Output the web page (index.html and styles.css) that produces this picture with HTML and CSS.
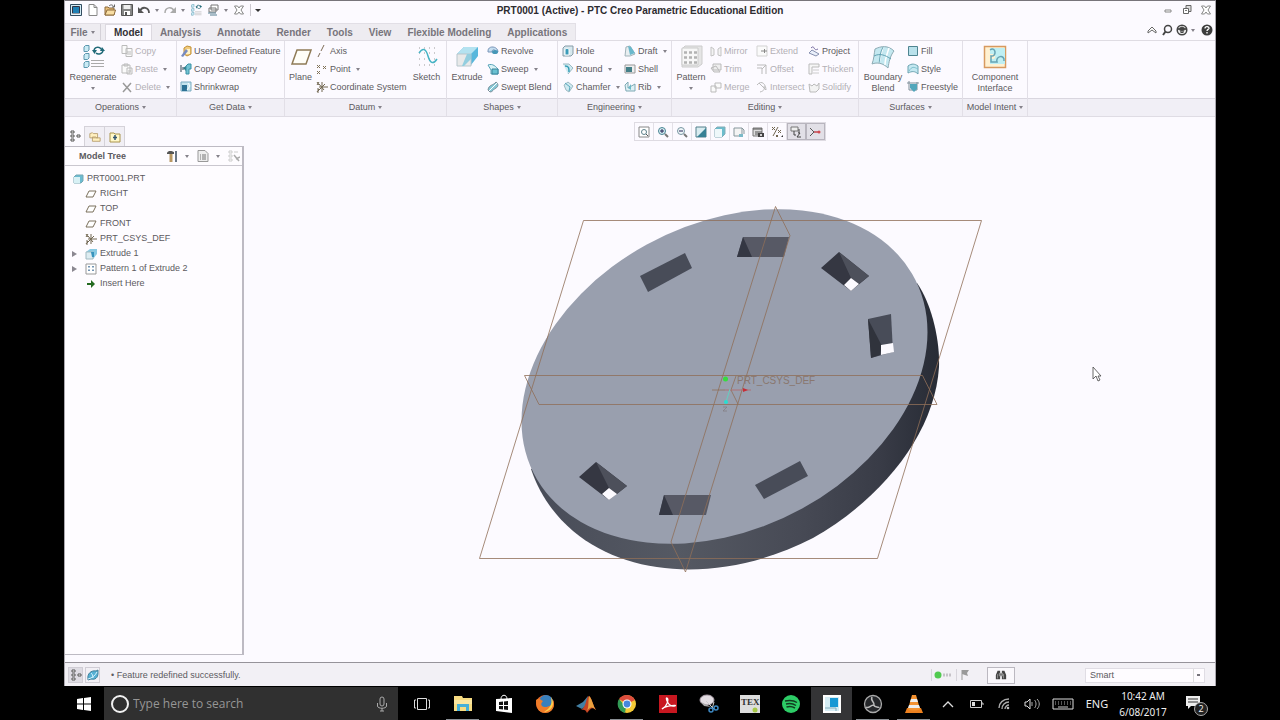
FILE: index.html
```html
<!DOCTYPE html>
<html lang="en">
<head>
<meta charset="utf-8">
<title>PRT0001 (Active) - PTC Creo Parametric Educational Edition</title>
<link rel="stylesheet" href="styles.css">
</head>
<body>
<svg class="defs" aria-hidden="true">
  <symbol id="logo" viewBox="0 0 12 12"><path d="M.5.5h11v11H.5z" fill="#d5edf6" stroke="#334c60"/><path d="M2.500 2.500h7v7h-7z" fill="#1f7fb4" stroke="#334"/><path d="M2 10h8" stroke="#fff"/></symbol>
  <symbol id="new" viewBox="0 0 12 12"><path d="M2 .5h5l3 3v8H2zM7 .5v3h3" fill="#fff" stroke="#888"/></symbol>
  <symbol id="open" viewBox="0 0 12 12"><path d="M1 11V3h3l1 1h5v7z" fill="#e8bd7a" stroke="#8c6b3c"/><path d="M1 11l2-5h8.500L10 11z" fill="#f8dda2" stroke="#8c6b3c"/><path d="M5 2c2-2 4-1 5 1M10.500.5V3H8" fill="none" stroke="#666"/></symbol>
  <symbol id="save" viewBox="0 0 12 12"><path d="M.5.5h11v11H.5z" fill="#858585" stroke="#555"/><path d="M2.500 1h7v4h-7z" fill="#eee"/><path d="M3 7h6v4H3z" fill="#fff"/><path d="M4 8h2v3H4z" fill="#555"/></symbol>
  <symbol id="undo" viewBox="0 0 12 12"><path d="M2 7c2-5 9-4 9 2" fill="none" stroke="#555" stroke-width="1.800"/><path d="M0 3v6h6z" fill="#555"/></symbol>
  <symbol id="redo" viewBox="0 0 12 12"><path d="M10 7C8 2 1 3 1 9" fill="none" stroke="#aaa" stroke-width="1.500"/><path d="M12 3v6H6z" fill="#aaa"/></symbol>
  <symbol id="regen" viewBox="0 0 24 24"><g fill="#c9eaf4" stroke="#5b97ae"><path d="M3 2l1.500-1.500H8V5L6.500 6.500H3z"/><path d="M3 10l1.500-1.500H8V13l-1.500 1.500H3z"/><path d="M3 18l1.500-1.500H8V21l-1.500 1.500H3z"/></g><path d="M13 6c0-4 5-5 7-2M22 5c0 4-5 5-7 3" fill="none" stroke="#216a78" stroke-width="1.500"/><path d="M11 5h5l-2.500 4zM19 6h5l-3-4z" fill="#216a78"/><path d="M10 15.500h13M10 18.500h13M10 21.500h13" stroke="#aaa"/></symbol>
  <symbol id="windows" viewBox="0 0 12 12"><path d="M4 1h7v5H4zM2 4h7v4H2z" fill="#fff" stroke="#777"/><path d="M1 9h8M3 11h7" stroke="#557f91"/></symbol>
  <symbol id="closewin" viewBox="0 0 12 12"><path d="M1.500 2h3L6 4l1.500-2h3L8 6l2.500 4h-3L6 8l-1.500 2h-3L4 6z" fill="#fff" stroke="#888"/></symbol>
  <symbol id="minwin" viewBox="0 0 12 12"><path d="M3 6h6v2H3z" fill="#fff" stroke="#888"/></symbol>
  <symbol id="maxwin" viewBox="0 0 12 12"><path d="M5 1.500h5v6H5z" fill="#ddd" stroke="#666"/><path d="M2.500 4.500h5v5h-5z" fill="#fff" stroke="#666"/><path d="M4 6.500h2" fill="none" stroke="#777"/></symbol>
  <symbol id="copy" viewBox="0 0 12 12"><path d="M1 .5h5v8H1zM5 3.500h6v8H5z" fill="#fafafa" stroke="#bbb"/><path d="M6 7h4M6 9h4" stroke="#bbb"/></symbol>
  <symbol id="paste" viewBox="0 0 12 12"><path d="M1 2h8v8H1zM3 1h4v2H3zM6 5h5v6H6z" fill="#fafafa" stroke="#bbb"/><path d="M7 8h3" stroke="#bbb"/></symbol>
  <symbol id="delete" viewBox="0 0 12 12"><path d="M2 2l8 9M10 2l-8 9" stroke="#999" stroke-width="1.500"/></symbol>
  <symbol id="udf" viewBox="0 0 12 12"><path d="M4 3l3-2 4 1v7l-4 2-3-2z" fill="#f2cb7c" stroke="#c19037"/><path d="M6 4h4v5H6z" fill="#fff3c9"/><path d="M1 11l5-7 2 2-5 6z" fill="#788bc1"/></symbol>
  <symbol id="copygeo" viewBox="0 0 12 12"><path d="M1 2v7M3 4v3" stroke="#345"/><path d="M3 5l3-2v5z" fill="#317b85"/><path d="M6 3l2-2h3v5H9v5H6z" fill="#73c3d3" stroke="#3a91a5"/></symbol>
  <symbol id="shrink" viewBox="0 0 12 12"><path d="M1 1h10v9H1z" fill="#c6e5ef" stroke="#7babc1"/><path d="M2 4h5v6H2z" fill="#2d7295"/><path d="M8 2l2 3-3 4" fill="none" stroke="#fff"/></symbol>
  <symbol id="plane" viewBox="0 0 24 24"><path d="M8 5h14l-5 14H3z" fill="#fffef8" stroke="#8f7b57" stroke-width="1.500"/></symbol>
  <symbol id="axis" viewBox="0 0 12 12"><path d="M8 0L5 6M4 8l-2 4" stroke="#7d6b55"/></symbol>
  <symbol id="point" viewBox="0 0 12 12"><path d="M1 2l3 3M4 2L1 5M7 3l3 3M10 3L7 6M1 8l3 3M4 8l-3 3" stroke="#7f7156"/></symbol>
  <symbol id="csys" viewBox="0 0 12 12"><path d="M6 1v10M3 6h9M2 10l7-7M3 3l5 6M1 1l2 3M3 1L1 4M1 8h2l-2 3h2" fill="none" stroke="#716650"/></symbol>
  <symbol id="sketch" viewBox="0 0 24 24"><path d="M4 3h18M4 8h18M4 14h18M4 20h18" stroke="#9a9a9a" stroke-dasharray="1 4"/><path d="M4 8c4-6 7-4 9 3s5 9 9 3" fill="none" stroke="#45b3c4" stroke-width="1.500"/></symbol>
  <symbol id="extrude" viewBox="0 0 24 24"><path d="M9 2h14v9l-7 9V9H2z" fill="#58b7dc"/><path d="M2 9l7-7h14l-7 7z" fill="#b4e2f0"/><path d="M2 9h14v12H2z" fill="#e8e9e9" stroke="#b7c6cc"/><path d="M12 9h4v5l-7 7H7z" fill="#93cedf"/></symbol>
  <symbol id="revolve" viewBox="0 0 12 12"><path d="M1 6c0-6 10-5 10 1H9C8 4 5 4 5 7H1z" fill="#c5def0" stroke="#7894b8"/><ellipse cx="8" cy="7" rx="3" ry="2" fill="#4697b7"/></symbol>
  <symbol id="sweep" viewBox="0 0 12 12"><path d="M1 2c5-2 8 2 10 4v5H4V7z" fill="#d9f2f5" stroke="#56a3b9"/><path d="M5 6h6v5H5z" fill="#6ac1d1" stroke="#39839a"/></symbol>
  <symbol id="blend" viewBox="0 0 12 12"><path d="M1 9C2 3 6 5 9 1c3 2 2 5 0 6-3 1-3 4-6 4z" fill="#87c9d7" stroke="#788f9b"/><path d="M2 10l8-8" stroke="#fff"/></symbol>
  <symbol id="hole" viewBox="0 0 12 12"><path d="M1 3l2-2h8v8l-2 2H1z" fill="#d7e8ee" stroke="#879ca8"/><path d="M3 10V5c0-2 4-2 4 0v5z" fill="#3b9bb9" stroke="#fff"/></symbol>
  <symbol id="round" viewBox="0 0 12 12"><path d="M1 1h6l4 4-5 6" fill="#cfeaf1" stroke="#9bb9c2"/><path d="M3 3c4 0 4 2 4 6" fill="none" stroke="#349db6" stroke-width="1.500"/></symbol>
  <symbol id="chamfer" viewBox="0 0 12 12"><path d="M2 4l4-3 5 4-4 6-3-2z" fill="#cfeaf1" stroke="#9bb9c2"/><path d="M3 2l5 4-1 4" fill="none" stroke="#58a9bd"/></symbol>
  <symbol id="draft" viewBox="0 0 12 12"><path d="M2 2l4-1 5 8-5 2H1z" fill="#e8eef0" stroke="#a1b3ba"/><path d="M4 1l3 1 4 6-5 2z" fill="#6ab8cc"/></symbol>
  <symbol id="shell" viewBox="0 0 12 12"><path d="M1 2h10v8H1z" fill="#eee" stroke="#999"/><path d="M2 4h6v5H2z" fill="#437f88"/></symbol>
  <symbol id="rib" viewBox="0 0 12 12"><path d="M1 4l3-3v6l7-4v7H2z" fill="#dff1f5" stroke="#7fa9b4"/><path d="M4 7l3-4v6z" fill="#6db9c7"/></symbol>
  <symbol id="pattern" viewBox="0 0 24 24"><path d="M3 4l3-3h17v18l-4 3H3z" fill="#e5e5e5" stroke="#ccc"/><path d="M3 3h16v17H3z" fill="#f7f7f7" stroke="#ccc"/><path d="M5 7.500h13M5 12.500h13M5 17.500h13" stroke="#b2b2b2" stroke-width="2.500" stroke-dasharray="3 2"/></symbol>
  <symbol id="mirror" viewBox="0 0 12 12"><path d="M1 2l3 2v6l-3 1zM11 2L8 4v6l3 1z" fill="#f3f3f3" stroke="#c3c3c3"/></symbol>
  <symbol id="trim" viewBox="0 0 12 12"><path d="M3 1h8v6H3zM1 5l5-2 4 6H4z" fill="#eee" stroke="#bbb"/></symbol>
  <symbol id="merge" viewBox="0 0 12 12"><path d="M1 5h5v6H1zM5 2h6v5H5z" fill="#fafafa" stroke="#bbb"/></symbol>
  <symbol id="extend" viewBox="0 0 12 12"><path d="M1 1h10v10H1z" fill="#fafafa" stroke="#d2d2d2"/><path d="M5 6h6M8.500 4v4" stroke="#888"/></symbol>
  <symbol id="offset" viewBox="0 0 12 12"><path d="M1 2h9v9M1 5h5v6M6 6l4-4" fill="none" stroke="#bbb"/></symbol>
  <symbol id="intersect" viewBox="0 0 12 12"><path d="M1 4c5-6 9 0 9 5M4 11c4-1 5-3 4-6M3 2l7 7" fill="none" stroke="#bbb"/></symbol>
  <symbol id="project" viewBox="0 0 12 12"><path d="M1 8l3-3 7 4-3 2z" fill="#e9effa" stroke="#8690af"/><path d="M3 3c4-4 2 4 7 1" fill="none" stroke="#786fa2"/></symbol>
  <symbol id="thicken" viewBox="0 0 12 12"><path d="M1 1h10v3H4v7H1z" fill="#f6f6f6" stroke="#bbb"/><path d="M5 7h6M5 10h6" stroke="#ccc"/></symbol>
  <symbol id="solid" viewBox="0 0 12 12"><path d="M1 3l3 2 2-2 3 2 2-3v6l-3 3H2z" fill="#f3f3f3" stroke="#bbb"/></symbol>
  <symbol id="boundary" viewBox="0 0 24 24"><path d="M4 4C10 1 17 0 23 6c-4 5-5 11-6 17-5-5-11-6-16-4 2-5 2-10 3-15z" fill="#c4e8f0" stroke="#8eabb4"/><path d="M12 2c-2 6-3 12-4 16M18 3c-2 6-4 11-4 17" fill="none" stroke="#fff" stroke-width="1.500"/><path d="M3 11c6-3 11-1 17 3M12 2c-3 5-3 11-4 16" fill="none" stroke="#60a1b2"/></symbol>
  <symbol id="fill" viewBox="0 0 12 12"><path d="M1.500 1.500h9v9h-9z" fill="#b9e1eb" stroke="#4e8490"/></symbol>
  <symbol id="style" viewBox="0 0 12 12"><path d="M1 3c4-3 7-2 10 0v8c-3-3-6-3-10-1z" fill="#c4e8f1" stroke="#6aa2b0"/><path d="M2 8c3-5 5-4 9-2" fill="none" stroke="#7dc0cd"/></symbol>
  <symbol id="free" viewBox="0 0 12 12"><path d="M0 2h12M2 0v9h8V1" fill="none" stroke="#7f8e98"/><path d="M3 3h7v5l-3 3-4-4z" fill="#52a6bb"/></symbol>
  <symbol id="component" viewBox="0 0 24 24"><path d="M1.500 1.500h21v21h-21z" fill="#fff1d2" stroke="#d79a60" stroke-width="1.500"/><path d="M7 3h15v16H7v-5h3c3 0 3-5 0-5H7z" fill="#bfeff3"/><path d="M7 5c6-4 7 7 1 6v6h6c-2-6 8-8 7-1" fill="none" stroke="#67a4b4" stroke-width="1.500"/></symbol>
  <symbol id="up" viewBox="0 0 12 12"><path d="M2 7l4-4 4 4v2L6 6 2 9z" fill="#fff" stroke="#666"/></symbol>
  <symbol id="find" viewBox="0 0 12 12"><circle cx="7" cy="5" r="3.500" fill="none" stroke="#444" stroke-width="1.500"/><path d="M4.500 7.500L2 11" stroke="#444" stroke-width="2"/></symbol>
  <symbol id="learn" viewBox="0 0 12 12"><circle cx="6" cy="6" r="4.800" fill="#eee" stroke="#444" stroke-width="1.500"/><path d="M2 5l4-2 4 2-4 2zM4 7.500c1 1.500 3 1.500 4 0" fill="#444" stroke="#444"/></symbol>
  <symbol id="help" viewBox="0 0 12 12"><circle cx="6" cy="6" r="5.500" fill="#3d3d3d"/><path d="M4 4.500c0-3 4.500-2 4 0-.5 1-2 1-2 2.500M6 8v1.500" fill="none" stroke="#fff" stroke-width="1.300"/></symbol>
  <symbol id="zoomin" viewBox="0 0 12 12"><circle cx="5" cy="5" r="3.500" fill="#d8eff3" stroke="#498493"/><path d="M8 8l3 3" stroke="#777" stroke-width="2"/><path d="M3 5h4M5 3v4" stroke="#225"/></symbol>
  <symbol id="zoomout" viewBox="0 0 12 12"><circle cx="5" cy="5" r="3.500" fill="#eff7f9" stroke="#7996a2"/><path d="M8 8l3 3" stroke="#777" stroke-width="2"/><path d="M3 5h4" stroke="#225"/></symbol>
  <symbol id="refit" viewBox="0 0 12 12"><path d="M1 1h10v10H1z" fill="#fff" stroke="#888"/><circle cx="6" cy="6" r="2.500" fill="none" stroke="#5c7f8a"/><path d="M8 8l2 2" stroke="#555"/></symbol>
  <symbol id="repaint" viewBox="0 0 12 12"><path d="M1 1h10v10H1z" fill="#d9ecf0" stroke="#54808c"/><path d="M2 11l9-9v9z" fill="#378195"/></symbol>
  <symbol id="cube" viewBox="0 0 12 12"><path d="M1 3l2-2h8v7l-3 3H1z" fill="#6bbdcd" stroke="#84adb7"/><path d="M1 3h7v8H1z" fill="#eef8fa"/></symbol>
  <symbol id="views" viewBox="0 0 12 12"><path d="M1 2h8v8H1zM9 2l2 2v4" fill="#f4f4f4" stroke="#87979c"/><path d="M6 8h4v3H6z" fill="#7bbac8"/></symbol>
  <symbol id="viewmgr" viewBox="0 0 12 12"><path d="M1 2h9v8H1z" fill="#ddd" stroke="#777"/><path d="M1 3h9M3 6h7M3 8h7" stroke="#555"/><path d="M6 7h6v4H6z" fill="#444"/><circle cx="9" cy="9" r="1" fill="#fff"/></symbol>
  <symbol id="filters" viewBox="0 0 12 12"><path d="M1 1l3 3M4 1L1 4M7 1L2 10M7 4l3 3M10 4L7 7M5 9l2 2M7 9l-2 2" stroke="#716650"/><path d="M10 11h2V9z" fill="#333"/></symbol>
  <symbol id="annot" viewBox="0 0 12 12"><path d="M1 1h7v4H1z" fill="#eee" stroke="#777"/><path d="M4 5v4h2M9 3v4M8 7h2l-3 4h4" fill="none" stroke="#444"/></symbol>
  <symbol id="spin" viewBox="0 0 12 12"><path d="M1 2l4 4-4 4" fill="none" stroke="#555"/><path d="M5 6h5" stroke="#c2474f" stroke-width="1.500"/><circle cx="10" cy="6" r="1.500" fill="#d24a52"/></symbol>
  <symbol id="treeico" viewBox="0 0 12 12"><path d="M2 1h3v2H2zM2 5h3v2H2zM2 9h3v2H2zM8 5h3v2H8z" fill="#fff" stroke="#555"/></symbol>
  <symbol id="folders" viewBox="0 0 14 12"><path d="M1 2l3-1 1 1h5v5H1zM4 6h4l1 1h4v4H4z" fill="#fff0bf" stroke="#b59b6a"/></symbol>
  <symbol id="favorite" viewBox="0 0 12 12"><path d="M1 2h4l1 1h5v8H1z" fill="#fff8c9" stroke="#aa944c"/><path d="M6 4v5M4 6.500h4" stroke="#335570" stroke-width="1.500"/></symbol>
  <symbol id="tools" viewBox="0 0 12 12"><path d="M1 3c1-3 5-2 7-1v2H1z" fill="#555"/><path d="M5 4v8" stroke="#b99862" stroke-width="3"/><path d="M10 1v11" stroke="#6a7685" stroke-width="2"/></symbol>
  <symbol id="list" viewBox="0 0 12 12"><path d="M1 .5h7l3 3v8H1z" fill="#eee" stroke="#999"/><path d="M3 5h1M5 5h4M3 7h1M5 7h4M3 9h1M5 9h4" stroke="#777"/></symbol>
  <symbol id="filter" viewBox="0 0 12 12"><path d="M1 1h3v2H1zM1 5h3v2H1zM1 9h3v2H1zM6 2h4" fill="#fff" stroke="#ccc"/><path d="M6 5l5 6M8 9l4-2" stroke="#aaa" stroke-width="1.500"/></symbol>
  <symbol id="part" viewBox="0 0 12 12"><path d="M2 4l2-2h7v6l-2 2H2z" fill="#6cbcd1" stroke="#77a7b3"/><path d="M2 4h6v6H2z" fill="#d8f1f5"/></symbol>
  <symbol id="datum" viewBox="0 0 12 12"><path d="M4 3h7L8 9H1z" fill="#fff" stroke="#7b705c"/></symbol>
  <symbol id="feature" viewBox="0 0 12 12"><path d="M1 4l4-3h7v5l-4 5H1z" fill="#88c9e2"/><path d="M1 4h7v7H1z" fill="#ddecf1" stroke="#a2bac2"/><path d="M6 4h3v5H7z" fill="#3893bd"/></symbol>
  <symbol id="pattree" viewBox="0 0 12 12"><path d="M1 1h10v10H1z" fill="#fff" stroke="#999"/><path d="M4 3v7M8 3v7" stroke="#44709a" stroke-width="1.500" stroke-dasharray="1.500 2"/></symbol>
  <symbol id="insert" viewBox="0 0 12 12"><path d="M2 6h5" stroke="#246b20" stroke-width="2"/><path d="M6 2l4 4-4 4z" fill="#246b20"/></symbol>
  <symbol id="web" viewBox="0 0 12 12"><path d="M1 10C0 5 4 1 9 2l2-1v3c0 5-3 7-7 6l-3 1z" fill="#56b1d4" stroke="#42809a"/><path d="M1 10C5 9 8 7 10 3M4 4c1 1 2 2 2 5" fill="none" stroke="#d9f4ff"/></symbol>
  <symbol id="binoc" viewBox="0 0 14 12"><path d="M3 1h3v10H1V6zM8 1h3l2 5v5H8z" fill="#444"/><path d="M5 4h4v3H5zM3 5v5M10 5v5" fill="#777" stroke="#999"/></symbol>
</svg>

<main class="screen">
<div class="app">
  <header class="titlebar">
    <div class="quick">
      <button aria-label="Window menu"><svg class="ic"><use href="#logo"/></svg></button>
      <button aria-label="New"><svg class="ic"><use href="#new"/></svg></button>
      <button aria-label="Open"><svg class="ic"><use href="#open"/></svg></button>
      <button aria-label="Save"><svg class="ic"><use href="#save"/></svg></button>
      <button aria-label="Undo" class="drop"><svg class="ic"><use href="#undo"/></svg><i class="caret"></i></button>
      <button aria-label="Redo" class="drop"><svg class="ic"><use href="#redo"/></svg><i class="caret"></i></button>
      <button aria-label="Regenerate"><svg class="ic"><use href="#regen"/></svg></button>
      <button aria-label="Windows" class="drop"><svg class="ic"><use href="#windows"/></svg><i class="caret"></i></button>
      <button aria-label="Close window"><svg class="ic"><use href="#closewin"/></svg></button>
      <button aria-label="Customize toolbar" class="custom"><i class="caret dark"></i></button>
    </div>
    <h1>PRT0001 (Active) - PTC Creo Parametric Educational Edition</h1>
    <div class="winbtns">
      <button aria-label="Minimize"><svg class="ic"><use href="#minwin"/></svg></button>
      <button aria-label="Restore"><svg class="ic"><use href="#maxwin"/></svg></button>
      <button aria-label="Close"><svg class="ic"><use href="#closewin"/></svg></button>
    </div>
  </header>

  <nav class="tabbar">
    <div class="tabs">
      <button class="file">File <i class="caret"></i></button>
      <button class="active">Model</button>
      <button>Analysis</button>
      <button>Annotate</button>
      <button>Render</button>
      <button>Tools</button>
      <button>View</button>
      <button>Flexible Modeling</button>
      <button>Applications</button>
    </div>
    <div class="helpers">
      <button aria-label="Minimize ribbon"><svg class="ic"><use href="#up"/></svg></button>
      <button aria-label="Search commands"><svg class="ic"><use href="#find"/></svg></button>
      <button aria-label="Learning" class="drop"><svg class="ic"><use href="#learn"/></svg><i class="caret"></i></button>
      <button aria-label="Help"><svg class="ic"><use href="#help"/></svg></button>
    </div>
  </nav>

  <div class="ribbon">
    <section class="group operations">
      <div class="tools">
        <button class="big"><svg><use href="#regen"/></svg>Regenerate<i class="caret"></i></button>
        <div class="col off">
          <button><svg class="ic"><use href="#copy"/></svg>Copy</button>
          <button><svg class="ic"><use href="#paste"/></svg>Paste<i class="caret"></i></button>
          <button><svg class="ic"><use href="#delete"/></svg>Delete<i class="caret"></i></button>
        </div>
      </div>
      <button class="foot">Operations<i class="caret"></i></button>
    </section>
    <section class="group getdata">
      <div class="tools">
        <div class="col">
          <button><svg class="ic"><use href="#udf"/></svg>User-Defined Feature</button>
          <button><svg class="ic"><use href="#copygeo"/></svg>Copy Geometry</button>
          <button><svg class="ic"><use href="#shrink"/></svg>Shrinkwrap</button>
        </div>
      </div>
      <button class="foot">Get Data<i class="caret"></i></button>
    </section>
    <section class="group datum">
      <div class="tools">
        <button class="big"><svg><use href="#plane"/></svg>Plane</button>
        <div class="col">
          <button><svg class="ic"><use href="#axis"/></svg>Axis</button>
          <button><svg class="ic"><use href="#point"/></svg>Point<i class="caret"></i></button>
          <button><svg class="ic"><use href="#csys"/></svg>Coordinate System</button>
        </div>
        <button class="big"><svg><use href="#sketch"/></svg>Sketch</button>
      </div>
      <button class="foot">Datum<i class="caret"></i></button>
    </section>
    <section class="group shapes">
      <div class="tools">
        <button class="big"><svg><use href="#extrude"/></svg>Extrude</button>
        <div class="col">
          <button><svg class="ic"><use href="#revolve"/></svg>Revolve</button>
          <button><svg class="ic"><use href="#sweep"/></svg>Sweep<i class="caret"></i></button>
          <button><svg class="ic"><use href="#blend"/></svg>Swept Blend</button>
        </div>
      </div>
      <button class="foot">Shapes<i class="caret"></i></button>
    </section>
    <section class="group engineering">
      <div class="tools">
        <div class="col">
          <button><svg class="ic"><use href="#hole"/></svg>Hole</button>
          <button><svg class="ic"><use href="#round"/></svg>Round<i class="caret"></i></button>
          <button><svg class="ic"><use href="#chamfer"/></svg>Chamfer<i class="caret"></i></button>
        </div>
        <div class="col">
          <button><svg class="ic"><use href="#draft"/></svg>Draft<i class="caret"></i></button>
          <button><svg class="ic"><use href="#shell"/></svg>Shell</button>
          <button><svg class="ic"><use href="#rib"/></svg>Rib<i class="caret"></i></button>
        </div>
      </div>
      <button class="foot">Engineering<i class="caret"></i></button>
    </section>
    <section class="group editing">
      <div class="tools">
        <button class="big"><svg><use href="#pattern"/></svg>Pattern<i class="caret"></i></button>
        <div class="col off">
          <button><svg class="ic"><use href="#mirror"/></svg>Mirror</button>
          <button><svg class="ic"><use href="#trim"/></svg>Trim</button>
          <button><svg class="ic"><use href="#merge"/></svg>Merge</button>
        </div>
        <div class="col off">
          <button><svg class="ic"><use href="#extend"/></svg>Extend</button>
          <button><svg class="ic"><use href="#offset"/></svg>Offset</button>
          <button><svg class="ic"><use href="#intersect"/></svg>Intersect</button>
        </div>
        <div class="col off">
          <button class="on"><svg class="ic"><use href="#project"/></svg>Project</button>
          <button><svg class="ic"><use href="#thicken"/></svg>Thicken</button>
          <button><svg class="ic"><use href="#solid"/></svg>Solidify</button>
        </div>
      </div>
      <button class="foot">Editing<i class="caret"></i></button>
    </section>
    <section class="group surfaces">
      <div class="tools">
        <button class="big"><svg><use href="#boundary"/></svg>Boundary<br>Blend</button>
        <div class="col">
          <button><svg class="ic"><use href="#fill"/></svg>Fill</button>
          <button><svg class="ic"><use href="#style"/></svg>Style</button>
          <button><svg class="ic"><use href="#free"/></svg>Freestyle</button>
        </div>
      </div>
      <button class="foot">Surfaces<i class="caret"></i></button>
    </section>
    <section class="group intent">
      <div class="tools">
        <button class="big"><svg><use href="#component"/></svg>Component<br>Interface</button>
      </div>
      <button class="foot">Model Intent<i class="caret"></i></button>
    </section>
    <div class="rest"></div>
  </div>

  <div class="work">
    <aside class="side">
      <div class="sidetabs">
        <button aria-label="Model tree" class="active"><svg class="ic"><use href="#treeico"/></svg></button>
        <button aria-label="Folder browser"><svg class="ic"><use href="#folders"/></svg></button>
        <button aria-label="Favorites"><svg class="ic"><use href="#favorite"/></svg></button>
      </div>
      <div class="panel">
        <div class="panelhead">
          <h2>Model Tree</h2>
          <button aria-label="Settings" class="drop"><svg class="ic"><use href="#tools"/></svg><i class="caret"></i></button>
          <button aria-label="Show" class="drop"><svg class="ic"><use href="#list"/></svg><i class="caret"></i></button>
          <button aria-label="Filter"><svg class="ic"><use href="#filter"/></svg></button>
        </div>
        <ul class="tree">
          <li><svg class="ic"><use href="#part"/></svg>PRT0001.PRT</li>
          <li><i class="twist"></i><svg class="ic"><use href="#datum"/></svg>RIGHT</li>
          <li><i class="twist"></i><svg class="ic"><use href="#datum"/></svg>TOP</li>
          <li><i class="twist"></i><svg class="ic"><use href="#datum"/></svg>FRONT</li>
          <li><i class="twist"></i><svg class="ic"><use href="#csys"/></svg>PRT_CSYS_DEF</li>
          <li><i class="twist has"></i><svg class="ic"><use href="#feature"/></svg>Extrude 1</li>
          <li><i class="twist has"></i><svg class="ic"><use href="#pattree"/></svg>Pattern 1 of Extrude 2</li>
          <li><i class="twist"></i><svg class="ic"><use href="#insert"/></svg>Insert Here</li>
        </ul>
      </div>
    </aside>
    <div class="view">
      <div class="viewbar">
        <button aria-label="Refit"><svg class="ic"><use href="#refit"/></svg></button>
        <button aria-label="Zoom in"><svg class="ic"><use href="#zoomin"/></svg></button>
        <button aria-label="Zoom out"><svg class="ic"><use href="#zoomout"/></svg></button>
        <button aria-label="Repaint"><svg class="ic"><use href="#repaint"/></svg></button>
        <button aria-label="Display style"><svg class="ic"><use href="#cube"/></svg></button>
        <button aria-label="Saved orientations"><svg class="ic"><use href="#views"/></svg></button>
        <button aria-label="View manager"><svg class="ic"><use href="#viewmgr"/></svg></button>
        <button aria-label="Datum display filters"><svg class="ic"><use href="#filters"/></svg></button>
        <button aria-label="Annotation display" class="pressed"><svg class="ic"><use href="#annot"/></svg></button>
        <button aria-label="Spin center" class="pressed"><svg class="ic"><use href="#spin"/></svg></button>
      </div>
      <svg class="model" viewBox="244 141 971 521" role="img" aria-label="Disc with eight rectangular slots">
        <defs>
          <linearGradient id="rim" gradientUnits="userSpaceOnUse" x1="535" y1="0" x2="940" y2="0">
            <stop offset="0" stop-color="#484c58"/><stop offset=".35" stop-color="#555963"/><stop offset=".65" stop-color="#474a55"/><stop offset=".85" stop-color="#393c47"/><stop offset="1" stop-color="#272b35"/>
          </linearGradient>
        </defs>
        <path d="M917 283C931 303 940 338 939 367C935 433 882 499 813 538C732 580 634 582 573 531C553 514 539 493 531 469z" fill="url(#rim)"/>
        <circle r="1" transform="matrix(203 -44.500 0 -161.300 724.500 376.500)" fill="#999fae"/>
        <g fill="#484c58">
          <path d="M640 276l45-23 7 15-44 24z"/><path d="M755 485l45-24 8 15-44 23z"/>
          <path d="M743 237h46l-5 20h-47zM664 495h47l-5 20h-47z" fill="#575965"/>
          <path d="M743 237l9 20h-15zM664 495l9 20h-14z" fill="#343743"/>
          <path d="M839 252l30 24-18 15-30-23zM596 462l31 24-18 14-30-23z" fill="#353742"/>
          <path d="M839 252l30 24-10 8-8-6zM596 462l31 24-10 8-8-6z" fill="#4d505b"/>
          <path d="M868 319l23-5 2 38-22 6z"/><path d="M868 319l14 27-2 9-9 3z" fill="#30333c"/>
          <path d="M851 278l8 6-8 7-7-6zM609 488l8 6-8 6-7-6zM881 345l12-2 1 9-13 3z" fill="#fcfaff"/>
        </g>
        <g fill="none" stroke="#8f6f58" stroke-width=".8">
          <path d="M583.500 220.500h398L877.500 558.500h-398z"/>
          <path d="M524.500 375.500h398l14.500 29H539z"/>
          <path d="M775.500 206.500l14.500 29-104.500 336.500-14.500-30z"/>
          <path d="M736 376l-5 14 7 14M725 390h-13"/>
        </g>
        <path d="M725 390h26" stroke="#b56567" stroke-width=".8"/><path d="M743 388l5 2-5 2z" fill="#c62d38"/>
        <path d="M726 402l4-13" stroke="#63cfc1"/><circle cx="725.500" cy="379" r="2.500" fill="#36dc3e"/><circle cx="726" cy="402" r="2" fill="#29ded0"/>
        <text x="737" y="384" class="csyslabel">PRT_CSYS_DEF</text>
        <path d="M723 407h4l-4 4h4" fill="none" stroke="#847f83" stroke-width=".8"/>
        <path d="M1093 367v12l3-3 2 5 2-1-2-4h3z" fill="#fff" stroke="#444" stroke-width=".8"/>
      </svg>
    </div>
  </div>

  <footer class="status">
    <button aria-label="Toggle tree" class="tog pressed"><svg class="ic"><use href="#treeico"/></svg></button>
    <button aria-label="Toggle browser" class="tog"><svg class="ic"><use href="#web"/></svg></button>
    <p>• Feature redefined successfully.</p>
    <span class="lamp"><svg viewBox="0 0 24 12"><circle cx="6" cy="6" r="3.500" fill="#51ca50"/><path d="M11 6h8" stroke="#c5c2c8" stroke-width="3" stroke-dasharray="2 1"/></svg></span>
    <span class="flag"><svg viewBox="0 0 12 12"><path d="M3 1v10" stroke="#999"/><path d="M3 1h7L8 4l1 3-6-2z" fill="#999"/></svg></span>
    <button aria-label="Find" class="findbtn"><svg class="ic"><use href="#binoc"/></svg></button>
    <select aria-label="Selection filter"><option>Smart</option></select>
  </footer>
</div>

<footer class="taskbar">
  <button class="start" aria-label="Start"><svg viewBox="0 0 14 14"><path d="M0 2l6-1v5.500H0zM7 1l7-1v6.500H7zM0 7.500h6V13l-6-1zM7 7.500h7V14l-7-1z" fill="#fff"/></svg></button>
  <label class="search"><svg viewBox="0 0 20 20"><circle cx="10" cy="10" r="8" fill="none" stroke="#f2f2f2" stroke-width="2"/></svg><input type="text" aria-label="Search" placeholder="Type here to search"><svg viewBox="0 0 20 20"><rect x="8" y="3" width="4" height="9" rx="2" fill="none" stroke="#aaa"/><path d="M5.500 9v3c0 3 9 3 9 0V9M10 14v3M8 17h4" fill="none" stroke="#aaa"/></svg></label>
  <div class="apps">
    <button aria-label="Task view"><svg viewBox="0 0 20 20"><path d="M5.500 4.500h9v11h-9zM4 6H2.500v8H4M16 6h1.500v8H16" fill="none" stroke="#ddd"/></svg></button>
    <button aria-label="File Explorer" class="run"><svg viewBox="0 0 20 20"><path d="M1 2h8l1 2h9v13H1z" fill="#f7dc82"/><path d="M1 6h18v4H1z" fill="#fbe6a0"/><path d="M4 10h12v7h-3v-4H7v4H4z" fill="#46b0d8"/></svg></button>
    <button aria-label="Store"><svg viewBox="0 0 20 20"><path d="M7 5c0-5 6-5 6 0" fill="none" stroke="#fff"/><path d="M2 5l16-1v15L2 17z" fill="#fff"/><path d="M5 8l4-.5V11H5zM10 7.400l4-.4v4h-4zM5 12h4v3.500L5 15zM10 12h4v4l-4-.4z" fill="#111"/></svg></button>
    <button aria-label="Firefox"><svg viewBox="0 0 20 20"><circle cx="10" cy="10" r="9" fill="#e9682b"/><circle cx="11" cy="8" r="7" fill="#3980bd"/><path d="M1 6c3-3 5 0 7 1-3 3-2 6 2 6s8-2 8-7c3 8-2 13-8 13S1 14 1 6z" fill="#ef7c29"/><path d="M16 3c5 8 0 14-7 15 8-5 8-9 7-15z" fill="#ffcf4b"/></svg></button>
    <button aria-label="MATLAB"><svg viewBox="0 0 20 20"><path d="M0 12l7-4 5-6-1 9-5 4z" fill="#427fa3"/><path d="M5 16c5-2 5-13 8-14 3 2 4 10 7 14-4-3-5-2-9 3-1-3-3-4-6-3z" fill="#c64423"/><path d="M13 2c-1 7 0 10-2 15 3-4 5-5 9-1-3-4-4-12-7-14z" fill="#eba13e"/></svg></button>
    <button aria-label="Chrome" class="run"><svg viewBox="0 0 20 20"><circle cx="10" cy="10" r="9" fill="#f4c936"/><path d="M10 10L2 5c4-6 13-5 16 1z" fill="#dd4d3d"/><path d="M2 5l7 8-1 6C1 17-1 10 2 5z" fill="#319b56"/><circle cx="10" cy="10" r="4.500" fill="#fff"/><circle cx="10" cy="10" r="3.400" fill="#4687dd"/></svg></button>
    <button aria-label="Acrobat Reader"><svg viewBox="0 0 20 20"><path d="M1 1h18v18H1z" fill="#c81720"/><path d="M4 15c5-2 7-10 5-11s1 9 7 8S8 11 4 15z" fill="none" stroke="#fff" stroke-width="1.300"/></svg></button>
    <button aria-label="Snipping Tool"><svg viewBox="0 0 20 20"><ellipse cx="8" cy="6" rx="7" ry="5" fill="#e2dce1" stroke="#aa9da8"/><path d="M2 8l3 4 7 1" fill="#aaa"/><path d="M7 7l9 9M15 8l-2 7" stroke="#ccc"/><circle cx="12" cy="16" r="2" fill="none" stroke="#3e89c3" stroke-width="1.500"/><circle cx="17" cy="14" r="2" fill="none" stroke="#3e89c3" stroke-width="1.500"/></svg></button>
    <button aria-label="TeX editor"><svg viewBox="0 0 20 20"><path d="M0 1h20v18H0z" fill="#ddd"/><text x="1" y="11" class="tex">TEX</text><circle cx="15" cy="16" r="2.500" fill="#a7c847"/></svg></button>
    <button aria-label="Spotify"><svg viewBox="0 0 20 20"><circle cx="10" cy="10" r="9" fill="#2dcc66"/><path d="M4 7c5-1 9-.5 12 1.500M5 10c4-1 7-.5 10 1.500M5.500 13c3-1 6-.5 8.500 1" fill="none" stroke="#123b20" stroke-width="1.500"/></svg></button>
    <button aria-label="Creo" class="current"><svg viewBox="0 0 20 20"><path d="M1 1h18v18H1z" fill="#fff"/><path d="M3 3h14v14H3z" fill="#d5edf4"/><path d="M8 4h8v9H8z" fill="#1798d4"/><path d="M3 14h11v3" fill="none" stroke="#84adbc"/></svg></button>
    <button aria-label="OBS" class="run"><svg viewBox="0 0 20 20"><circle cx="10" cy="10" r="8.500" fill="#25272a" stroke="#aaa" stroke-width="1.300"/><path d="M9 3c-2 4 3 5 2 8M3 13c3 2 4-2 8-2M11 11c0 3 5 1 5 3" fill="none" stroke="#bbb" stroke-width="1.500"/></svg></button>
    <button aria-label="VLC" class="run"><svg viewBox="0 0 20 20"><path d="M3 14h14l2 5H1z" fill="#ed811f"/><path d="M8 1h4l4 14c-3 2-9 2-12 0z" fill="#f39130"/><path d="M7 5h6l1 3H6zM5 11h10l1 3H4z" fill="#eee"/></svg></button>
  </div>
  <div class="tray">
    <button aria-label="Hidden icons"><svg viewBox="0 0 20 20"><path d="M5 13l5-5 5 5" fill="none" stroke="#ddd" stroke-width="1.300"/></svg></button>
    <button aria-label="Battery"><svg viewBox="0 0 20 20"><path d="M4.500 6.500h11v7h-11zM16 9h1v2" fill="none" stroke="#ccc"/><path d="M6 8h3v4H6z" fill="#ddd"/></svg></button>
    <button aria-label="Network"><svg viewBox="0 0 20 20"><path d="M5 14C5 9 9 5 15 5M8 15c0-4 3-7 7-7M11 15c0-2 2-4 4-4" fill="none" stroke="#aaa" stroke-width="1.400"/><circle cx="14" cy="14" r="1.300" fill="#bbb"/></svg></button>
    <button aria-label="Volume"><svg viewBox="0 0 20 20"><path d="M3 8h2l3-3v10l-3-3H3z" fill="none" stroke="#ddd"/><path d="M10 8v4M12.500 6c2 2 2 6 0 8M15 5c3 3 3 7 0 10" fill="none" stroke="#aaa"/></svg></button>
    <button aria-label="Touch keyboard" class="wide"><svg viewBox="0 0 24 20"><path d="M2 5h20v10H2z" fill="none" stroke="#ddd"/><path d="M4 8h16M4 10h16" stroke="#aaa" stroke-dasharray="1 2"/><path d="M7 13h10" stroke="#ccc"/></svg></button>
    <button class="lang">ENG</button>
    <button class="clock">10:42 AM<br>6/08/2017</button>
    <button aria-label="Notifications, 2 new" class="notes"><svg viewBox="0 0 24 24"><path d="M4 4h14v10H9l-3 3v-3H4z" fill="#eee"/><path d="M6 7h10M6 10h10" stroke="#333"/></svg><span class="badge">2</span></button>
  </div>
</footer>
</main>
</body>
</html>
```

FILE: styles.css
```css
* { box-sizing: border-box; }
body {
  margin: 0;
  background: #000;
  color: #5c5a60;
  font: 9px/11px "Liberation Sans", Arial, sans-serif;
}
h1, h2, p, ul { margin: 0; padding: 0; font-size: inherit; }
button {
  display: flex;
  align-items: center;
  justify-content: center;
  margin: 0;
  padding: 0;
  border: 0;
  background: none;
  color: inherit;
  font: inherit;
  white-space: nowrap;
}
svg { display: block; flex: none; }
.defs { position: absolute; width: 0; height: 0; }
.ic { width: 12px; height: 12px; }
.caret {
  flex: none;
  margin-left: 3px;
  border: 2px solid transparent;
  border-top: 3px solid #85828a;
  border-bottom: 0;
}
.caret.dark { margin: 0; border-top-color: #333; border-width: 3px 3px 0; }

.screen {
  display: flex;
  flex-direction: column;
  min-height: 100vh;
  padding: 0 5%;
}
.app {
  display: flex;
  flex: 1;
  flex-direction: column;
  border-top: 1px solid #77747a;
  border-left: 1px solid #aaa7ae;
  border-right: 1px solid #aaa7ae;
  background: #fcfaff;
}

.titlebar, .tabbar { display: grid; grid-template-columns: 1fr auto 1fr; align-items: center; }
.titlebar { height: 18px; }
.titlebar h1 { color: #2d2b30; font-size: 10px; font-weight: bold; white-space: nowrap; }
.quick { display: flex; gap: 5px; padding-left: 5px; }
.quick .drop { gap: 3px; }
.quick .drop .caret { margin-left: 2px; }
.quick .custom { width: 14px; border-left: 1px solid #ccc9d0; }
.winbtns, .helpers { display: flex; justify-content: flex-end; }
.winbtns { gap: 7px; padding-right: 3px; }
.helpers { align-items: center; gap: 3px; padding-right: 2px; }
.helpers .caret { margin-right: 3px; }

.tabbar { grid-template-columns: auto 1fr; align-items: end; height: 22px; border-bottom: 1px solid #dfdce3; }
.helpers { height: 20px; }
.tabs { display: flex; background: #eeecf1; border: 1px solid #e2dfe6; border-bottom: 0; border-left: 0; }
.tabs button { height: 16px; padding: 0 8px; color: #77747b; font-size: 10px; font-weight: bold; }
.tabs .file { width: 36px; margin-right: 4px; padding: 0; border-right: 1px solid #d4d1d8; }
.tabs .active { background: #fcfaff; color: #333136; border: 1px solid #dcd9e0; border-width: 1px 1px 0; }

.ribbon { display: flex; border-bottom: 1px solid #dfdce4; }
.group { display: flex; flex-direction: column; flex: none; border-right: 1px solid #e2dfe7; }
.tools { display: grid; height: 57px; }
.foot, .rest { border-top: 1px solid #d9d6df; background: #f1eff6; }
.foot { height: 18px; }
.rest { flex: 1; align-self: flex-end; height: 18px; }
.operations { width: 112px; }
.operations .tools { grid-template-columns: 56px 1fr; }
.getdata { width: 108px; }
.getdata .tools { padding-left: 3px; }
.datum { width: 162px; }
.datum .tools { grid-template-columns: 31px 1fr 40px; }
.shapes { width: 111px; }
.shapes .tools { grid-template-columns: 40px 1fr; }
.engineering { width: 114px; }
.engineering .tools { grid-template-columns: 62px 1fr; padding-left: 4px; }
.editing { width: 187px; }
.editing .tools { grid-template-columns: 38px 46px 52px 1fr; }
.surfaces { width: 104px; }
.surfaces .tools { grid-template-columns: 48px 1fr; }
.intent { width: 65px; }
.big { flex-direction: column; justify-content: flex-start; padding-top: 4px; line-height: 11px; }
.big svg { width: 24px; height: 24px; margin-bottom: 3px; }
.big .caret { margin: 4px 0 0; }
.col { display: flex; flex-direction: column; align-items: flex-start; padding-top: 1px; }
.col button { height: 18px; gap: 2px; }
.off { color: #b3b0b6; }
.on { color: #5c5a60; }

.work { display: flex; flex: 1; }
.side { display: flex; flex-direction: column; flex: none; width: 179px; padding: 9px 0 7px; }
.sidetabs { display: flex; }
.sidetabs button { width: 20px; height: 20px; border: 1px solid #d5d2d9; border-left: 0; border-bottom: 0; background: #f1eff5; }
.sidetabs .active { background: #fcfaff; border-top: 0; }
.panel { flex: 1; border: 1px solid #bdbac3; border-left: 0; border-right-width: 2px; background: #fefcff; }
.panelhead { display: flex; align-items: center; gap: 8px; height: 19px; padding: 0 2px 0 14px; border-bottom: 1px solid #cac7cf; }
.panelhead h2 { flex: 1; font-weight: bold; }
.panelhead .caret { margin-left: 7px; }
.tree { padding: 5px 0 0 7px; list-style: none; }
.tree li { display: flex; align-items: center; gap: 3px; height: 15px; }
.twist { width: 10px; height: 6px; }
.has::before { content: ""; display: block; width: 0; border: 3px solid transparent; border-left: 5px solid #8b8890; border-right: 0; }

.view { display: flex; flex: 1; flex-direction: column; min-width: 0; }
.viewbar { display: flex; align-self: center; margin-top: 5px; border: 1px solid #dedbe2; }
.viewbar button { width: 19px; height: 17px; border-right: 1px solid #e3e0e7; }
.viewbar .pressed { background: #e2e0e7; border: 1px solid #b8b5be; }
.model { flex: 1; width: 100%; min-height: 0; }
.csyslabel { fill: #89776f; font-size: 10px; }

.status { display: flex; align-items: center; height: 24px; padding: 1px 10px 0 3px; border-top: 1px solid #96939a; background: #f2f0f5; }
.tog { width: 15px; height: 16px; margin-right: 2px; border: 1px solid #d0cdd5; }
.pressed { background: #dedce3; }
.status p { flex: 1; padding-left: 9px; }
.lamp { width: 26px; border-left: 1px solid #d8d5dc; border-right: 1px solid #d8d5dc; }
.lamp svg { width: 24px; height: 12px; }
.flag svg { width: 12px; height: 12px; }
.flag { margin: 0 16px 0 2px; }
.findbtn { width: 28px; height: 17px; border: 1px solid #bbb8c0; background: #faf8fc; }
.status select {
  width: 120px;
  height: 15px;
  margin-left: 70px;
  padding: 0 4px;
  appearance: none;
  border: 1px solid #e0dde4;
  border-radius: 0;
  background: linear-gradient(#77747c, #77747c) right 4px center / 3px 2px no-repeat, linear-gradient(#ddd, #ddd) right 10px center / 1px 100% no-repeat, #fefcff;
  color: inherit;
  font: inherit;
}

.taskbar { display: flex; height: 34px; padding-top: 1px; background: #000; color: #eee; font: 11px/16px "Noto Sans", "Open Sans", sans-serif; }
.taskbar svg { width: 20px; height: 20px; }
.start { width: 40px; }
.taskbar .start svg { width: 14px; height: 14px; }
.search { display: flex; align-items: center; flex: 0 1 294px; gap: 3px; padding: 0 6px; background: #303030; }
.search input { flex: 1; min-width: 0; padding: 0; border: 0; background: none; color: #eee; font: 12px/16px "Open Sans", "Noto Sans", sans-serif; }
.search input::placeholder { color: #969696; opacity: 1; }
.apps { display: flex; margin-left: 3px; }
.apps button { width: 41px; border-bottom: 2px solid transparent; border-top: 2px solid transparent; }
.apps .run { position: relative; }
.apps .run::after { content: ""; position: absolute; right: 4px; bottom: -2px; left: 4px; height: 1px; background: #8a8f94; }
.apps .current { background: #343436; }
.tex { fill: #333; font: bold 9px "Liberation Serif", serif; }
.tray { display: flex; margin-left: auto; }
.tray button { width: 28px; }
.tray .wide { width: 34px; }
.tray .wide svg { width: 24px; }
.tray .lang { width: 34px; }
.tray .clock { width: 58px; font-size: 10px; }
.tray .notes { position: relative; width: 44px; }
.tray .notes svg { width: 24px; height: 24px; }
.badge { position: absolute; left: 22px; top: 15px; width: 14px; height: 14px; border: 1px solid #aaa; border-radius: 50%; background: #222; font-size: 9px; line-height: 12px; text-align: center; }
```
